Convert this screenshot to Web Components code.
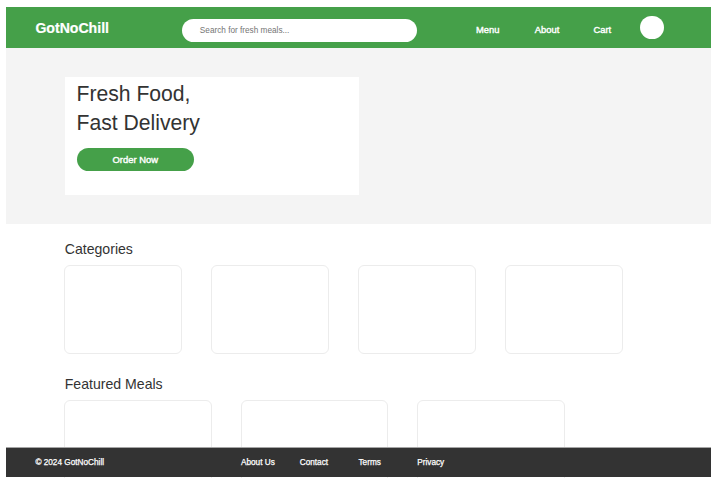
<!DOCTYPE html>
<html lang="en"><head><meta charset="utf-8"><title>GotNoChill</title>
<style>html,body{margin:0;height:478px;overflow:hidden;background:#fff}</style></head><body>
<meal-app></meal-app>
<script>
const define=(name,html)=>{
  const t=document.createElement('template');t.innerHTML=html;
  customElements.define(name,class extends HTMLElement{
    constructor(){super();this.attachShadow({mode:'open'}).append(t.content.cloneNode(true))}
  });
};
define('site-header',`<style>
:host{display:flex;height:41px;background:#45a049;color:#fff;box-sizing:border-box;padding-left:29.4px}
b{width:146.85px;font-size:14.1px;line-height:16px;padding-top:13px;-webkit-text-stroke:.2px}
.search{width:235px;height:23.5px;margin-top:11.75px;border-radius:12px;background:#fff;color:#757575;box-sizing:border-box;padding-left:17.6px;font-size:8.225px;line-height:23px;white-space:nowrap}
nav{display:flex;margin-left:58.75px;padding-top:17px;font-size:9.4px;line-height:12px;-webkit-text-stroke:.4px}
nav span{width:58.75px}
.avatar{width:23.5px;height:23.5px;border-radius:50%;background:#fff;margin:8.75px 0 0 -11.75px}
</style><b>GotNoChill</b><div class="search">Search for fresh meals...</div><nav><span>Menu</span><span>About</span><span>Cart</span></nav><div class="avatar"></div>`);
define('pill-button',`<style>:host{display:block;width:117.5px;height:23.5px;line-height:23.5px;border-radius:12px;background:#45a049;color:#fff;text-align:center;font-size:9.4px;-webkit-text-stroke:.4px}</style><slot></slot>`);
define('hero-banner',`<style>
:host{display:block;height:176px;background:#f4f4f4;box-sizing:border-box;padding:29.4px 0 0 58.75px}
.card{width:293.75px;height:117.5px;background:#fff;box-sizing:border-box;padding:2px 0 0 11.75px}
h1{margin:0 0 10.5px;font-size:21.15px;line-height:29px;font-weight:400}
</style><div class="card"><h1>Fresh Food,<br>Fast Delivery</h1><pill-button>Order Now</pill-button></div>`);
define('empty-card',`<style>:host{display:block;box-sizing:border-box;border:1px solid #ececec;border-radius:6px;background:#fff}</style><slot></slot>`);
define('card-section',`<style>
:host{display:block;padding-left:58.75px}
h2{margin:0;font-size:14.1px;line-height:17px;font-weight:400}
.row{display:flex;gap:28.9px;margin:7px 0 0 -.5px}
</style><h2><slot name="title"></slot></h2><div class="row"><slot></slot></div>`);
define('site-footer',`<style>
:host{display:flex;height:30px;box-sizing:border-box;border-top:1px solid #a5a5a5;background:#333;color:#fff;font-size:8.225px;line-height:10px;padding:10px 0 0 29.4px;-webkit-text-stroke:.25px}
.copy{width:205.6px}.link{width:58.75px}
</style><span class="copy">© 2024 GotNoChill</span><span class="link">About Us</span><span class="link">Contact</span><span class="link">Terms</span><span class="link">Privacy</span>`);
define('meal-app',`<style>
:host{display:block;position:relative;box-sizing:border-box;width:717px;height:478px;padding:7px 6px 0;overflow:hidden;font-family:"Liberation Sans",Arial,sans-serif;color:#333}
.cats{padding-top:17px}.cats empty-card{width:118px;height:89px}
.meals{padding-top:22px}.meals empty-card{width:147.5px;height:118px}
site-footer{position:absolute;left:6px;right:6px;top:447px}
</style><site-header></site-header><hero-banner></hero-banner>
<card-section class="cats"><span slot="title">Categories</span><empty-card></empty-card><empty-card></empty-card><empty-card></empty-card><empty-card></empty-card></card-section>
<card-section class="meals"><span slot="title">Featured Meals</span><empty-card></empty-card><empty-card></empty-card><empty-card></empty-card></card-section>
<site-footer></site-footer>`);
</script></body></html>
